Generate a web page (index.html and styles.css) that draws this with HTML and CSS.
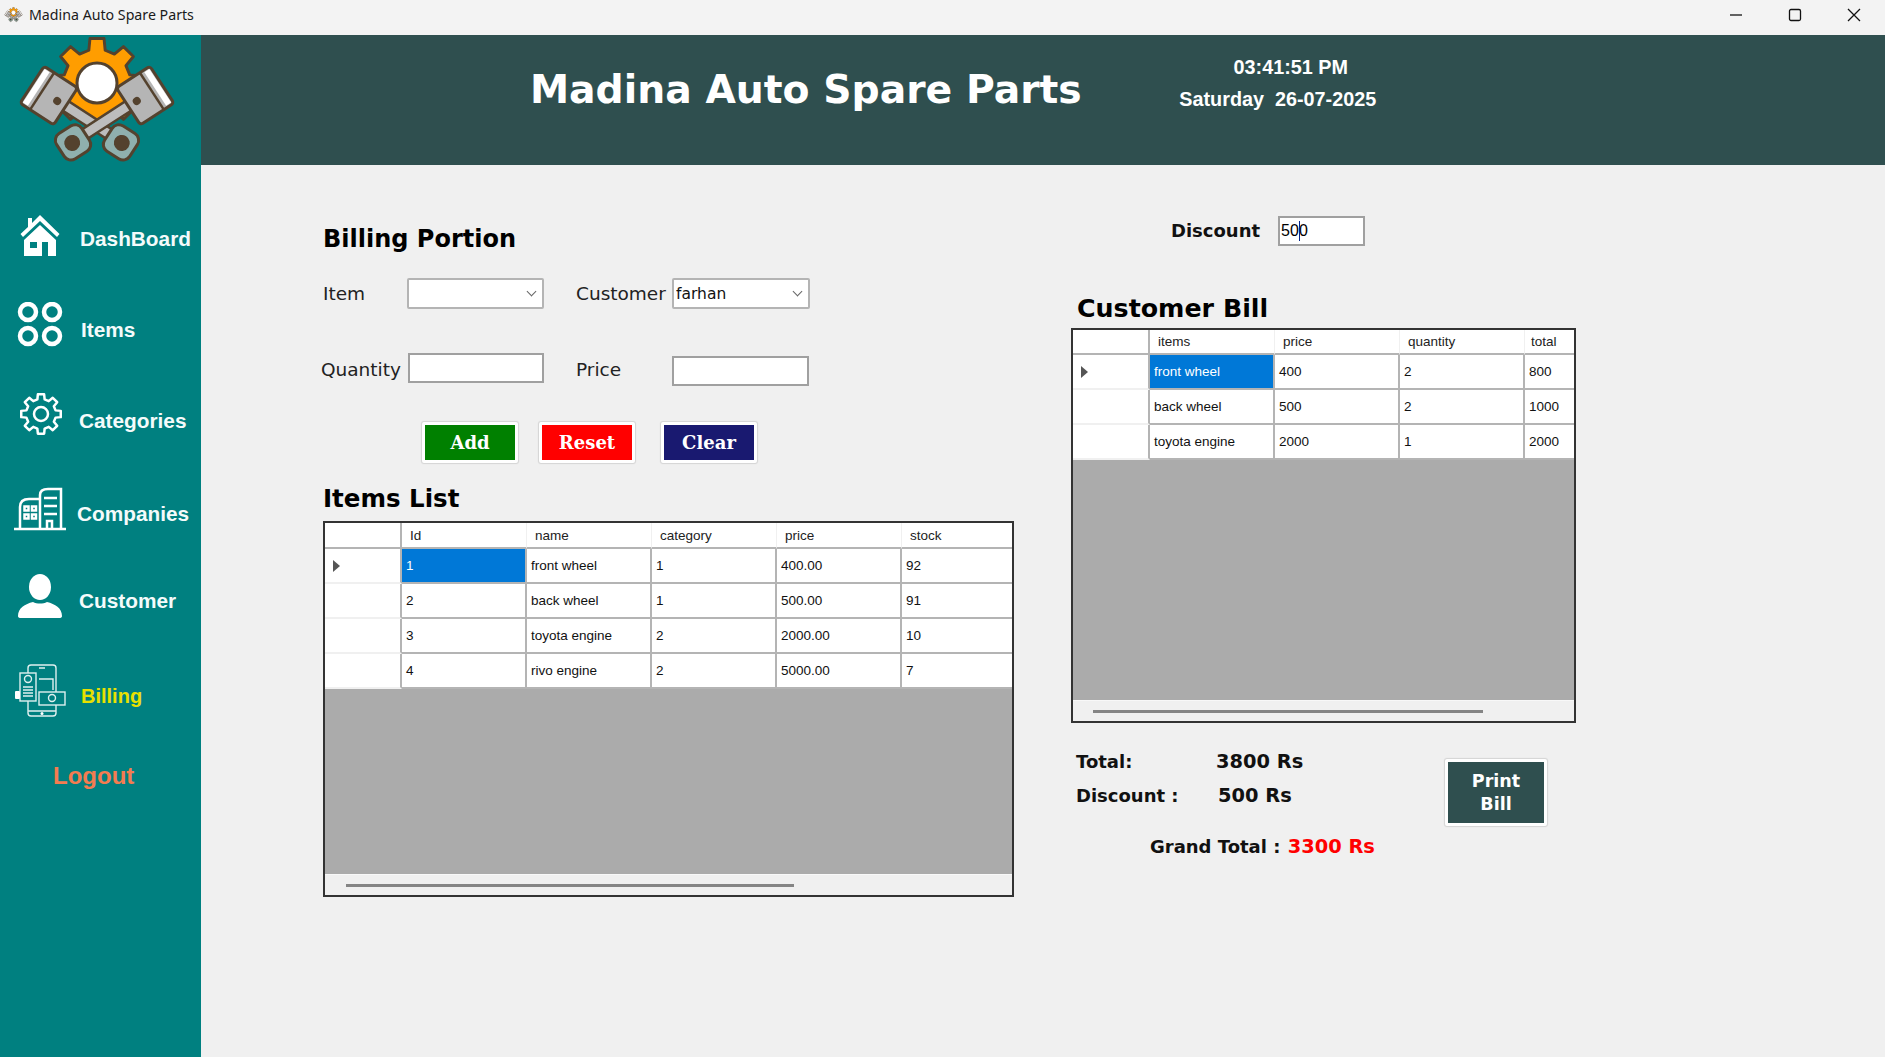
FILE: index.html
```html
<!DOCTYPE html>
<html lang="en">

<head>
    <meta charset="UTF-8">
    <title>Madina Auto Spare Parts</title>
    <link rel="stylesheet" href="styles.css">
</head>

<body>
    <div class="titlebar">
        <svg class="app-icon" viewBox="15 32 164 134"><use href="#logo-art"></use></svg>
        <span class="app-name">Madina Auto Spare Parts</span>
        <div class="win-btns">
            <svg class="win-btn" viewBox="0 0 12 12"><path d="M0 6h12" /></svg>
            <svg class="win-btn" viewBox="0 0 12 12"><rect x="0.5" y="0.5" width="11" height="11" rx="1.5" /></svg>
            <svg class="win-btn" viewBox="0 0 12 12"><path d="M0 0l12 12M12 0L0 12" /></svg>
        </div>
    </div>

    <div class="app">
        <aside class="sidebar">
            <svg class="logo" viewBox="0 35 201 155">
                <g id="logo-art">
                    <g transform="translate(97 83) scale(2.25)">
                        <path fill="#ff9d00" stroke="#54422e" stroke-width="1.3" stroke-linejoin="round"
                            d="M-3.63-14.55L-3.13-19.75 3.13-19.75 3.63-14.55 7.73-12.86 11.76-16.18 16.18-11.76 12.86-7.73 14.55-3.63 19.75-3.13 19.75 3.13 14.55 3.63 12.86 7.73 16.18 11.76 11.76 16.18 7.73 12.86 3.63 14.55 3.13 19.75-3.13 19.75-3.63 14.55-7.73 12.86-11.76 16.18-16.18 11.76-12.86 7.73-14.55 3.63-19.75 3.13-19.75-3.13-14.55-3.63-12.86-7.73-16.18-11.76-11.76-16.18-7.73-12.86Z" />
                    </g>
                    <circle cx="97" cy="83" r="20" fill="#fff" stroke="#54422e" stroke-width="3" />
                    <g id="piston" transform="translate(48 95) rotate(33)">
                        <rect x="18" y="-6" width="58" height="11" fill="#bdbdbd" stroke="#54422e" stroke-width="2.5" />
                        <rect x="72" y="-15" width="30" height="30" rx="8" fill="#8fb0ae" stroke="#54422e" stroke-width="3" />
                        <circle cx="88" cy="0" r="8" fill="#54422e" />
                        <rect x="-19" y="-22" width="40" height="44" rx="3" fill="#b5b5b5" stroke="#54422e" stroke-width="3" />
                        <rect x="-17" y="-20" width="6" height="40" fill="#fff" />
                        <path d="M-7-22V22" stroke="#54422e" stroke-width="2.500" />
                        <circle cx="11" cy="0" r="4" fill="#54422e" />
                    </g>
                    <use href="#piston" transform="translate(194 0) scale(-1 1)"></use>
                </g>
            </svg>

            <nav class="menu">
                <a class="menu-item item-dash" href="javascript:;">
                    <svg class="menu-icon" viewBox="0 0 80 46">
                        <path class="solid" d="M40 0L59.500 19 57 22 40 6 23 22 20.500 19 28 12V3h4V8z" />
                        <path class="solid" fill-rule="evenodd" d="M40 10L56 25V41H48V27H42V41H24V25zM30 27v6h7v-6z" />
                    </svg>
                    <span class="menu-label">DashBoard</span>
                </a>
                <a class="menu-item item-items" href="javascript:;">
                    <svg class="menu-icon" viewBox="0 0 80 46">
                        <g class="line thick">
                            <circle cx="28" cy="10" r="8" />
                            <circle cx="52" cy="10" r="8" />
                            <circle cx="28" cy="34" r="8" />
                            <circle cx="52" cy="34" r="8" />
                        </g>
                    </svg>
                    <span class="menu-label">Items</span>
                </a>
                <a class="menu-item item-cat" href="javascript:;">
                    <svg class="menu-icon" viewBox="0 0 80 46">
                        <g class="line" transform="translate(41 21)">
                            <path stroke-linejoin="round"
                                d="M-3.63-14.55L-3.13-19.75 3.13-19.75 3.63-14.55 7.73-12.86 11.76-16.18 16.18-11.76 12.86-7.73 14.55-3.63 19.75-3.13 19.75 3.13 14.55 3.63 12.86 7.73 16.18 11.76 11.76 16.18 7.73 12.86 3.63 14.55 3.13 19.75-3.13 19.75-3.63 14.55-7.73 12.86-11.76 16.18-16.18 11.76-12.86 7.73-14.55 3.63-19.75 3.13-19.75-3.13-14.55-3.63-12.86-7.73-16.18-11.76-11.76-16.18-7.73-12.86Z" />
                            <circle r="7" />
                        </g>
                    </svg>
                    <span class="menu-label">Categories</span>
                </a>
                <a class="menu-item item-comp" href="javascript:;">
                    <svg class="menu-icon" viewBox="0 0 80 46">
                        <g class="line">
                            <path d="M14 42h52" />
                            <path d="M20 42V20q0-8 9-8h11" />
                            <path d="M40 42V8q0-6 8-6h13v40" />
                            <path d="M44 11h13M44 19h13M44 27h13" />
                            <path d="M47 42v-8h5v8" />
                            <rect x="24.500" y="19.500" width="4" height="4" />
                            <rect x="32" y="19.500" width="4" height="4" />
                            <rect x="24.500" y="27.500" width="4" height="4" />
                            <rect x="32" y="27.500" width="4" height="4" />
                        </g>
                    </svg>
                    <span class="menu-label">Companies</span>
                </a>
                <a class="menu-item item-cust" href="javascript:;">
                    <svg class="menu-icon" viewBox="0 0 80 46">
                        <ellipse class="solid" cx="40" cy="13" rx="11" ry="13" />
                        <path class="solid" d="M18 42c0-8 7-12 15-14 4 2 10 2 14 0 8 2 15 6 15 14q0 2-3 2H21q-3 0-3-2z" />
                    </svg>
                    <span class="menu-label">Customer</span>
                </a>
                <a class="menu-item item-bill" href="javascript:;">
                    <svg class="menu-icon tall" viewBox="0 0 80 54">
                        <g class="line thin">
                            <rect x="28" y="1" width="28" height="51" rx="3" />
                            <path d="M28 47h28M39 4h6" />
                            <rect class="teal" x="20" y="9" width="16" height="28" />
                            <circle cx="28" cy="15" r="3.500" />
                            <path d="M23 23h10M23 26h10M23 29h10M23 32h10" />
                            <path d="M39 15h14v11" />
                            <rect class="teal" x="39" y="28" width="26" height="13" />
                            <circle cx="52" cy="34" r="3.500" />
                        </g>
                        <rect class="solid" x="15" y="27" width="5" height="8" rx="1" />
                        <circle class="solid" cx="42" cy="49.500" r="1.500" />
                    </svg>
                    <span class="menu-label billing">Billing</span>
                </a>
            </nav>
            <a class="logout" href="javascript:;">Logout</a>
        </aside>

        <div class="content">
            <header class="topbar">
                <h1 class="brand">Madina Auto Spare Parts</h1>
                <div class="clock">
                    <div class="clock-time">03:41:51 PM</div>
                    <div class="clock-date">Saturday&nbsp; 26-07-2025</div>
                </div>
            </header>

            <main class="page">
                <section class="left">
                    <h2 class="title title-billing">Billing Portion</h2>
                    <div class="form">
                        <label class="lbl lbl-item">Item</label>
                        <div class="combo"><select></select></div>
                        <span></span>
                        <label class="lbl">Customer</label>
                        <div class="combo combo-b">
                            <select>
                                <option>farhan</option>
                            </select>
                        </div>

                        <label class="lbl lbl-qty">Quantity</label>
                        <input class="field field-qty" type="text">
                        <span></span>
                        <label class="lbl">Price</label>
                        <input class="field field-price" type="text">
                    </div>

                    <div class="actions">
                        <button class="btn btn-add">Add</button>
                        <button class="btn btn-reset">Reset</button>
                        <button class="btn btn-clear">Clear</button>
                    </div>

                    <h2 class="title title-items">Items List</h2>
                    <div class="grid grid-items">
                        <table>
                            <colgroup>
                                <col class="c-head">
                                <col class="c-std">
                                <col class="c-std">
                                <col class="c-std">
                                <col class="c-std">
                                <col class="c-stock">
                            </colgroup>
                            <tr>
                                <th></th>
                                <th>Id</th>
                                <th>name</th>
                                <th>category</th>
                                <th>price</th>
                                <th>stock</th>
                            </tr>
                            <tr>
                                <td class="rowhead"><i class="arrow"></i></td>
                                <td class="sel">1</td>
                                <td>front wheel</td>
                                <td>1</td>
                                <td>400.00</td>
                                <td>92</td>
                            </tr>
                            <tr>
                                <td class="rowhead"></td>
                                <td>2</td>
                                <td>back wheel</td>
                                <td>1</td>
                                <td>500.00</td>
                                <td>91</td>
                            </tr>
                            <tr>
                                <td class="rowhead"></td>
                                <td>3</td>
                                <td>toyota engine</td>
                                <td>2</td>
                                <td>2000.00</td>
                                <td>10</td>
                            </tr>
                            <tr>
                                <td class="rowhead"></td>
                                <td>4</td>
                                <td>rivo engine</td>
                                <td>2</td>
                                <td>5000.00</td>
                                <td>7</td>
                            </tr>
                        </table>
                        <div class="grid-empty"></div>
                        <div class="hscroll"><div class="thumb thumb-items"></div></div>
                    </div>
                </section>

                <section class="right">
                    <div class="discount">
                        <label class="strong disc-label">Discount</label>
                        <div class="discount-box">
                            <input class="field field-disc" type="text" value="500">
                            <i class="caret"></i>
                        </div>
                    </div>

                    <h2 class="title title-bill">Customer Bill</h2>
                    <div class="grid grid-bill">
                        <table>
                            <colgroup>
                                <col class="c-head">
                                <col class="c-std">
                                <col class="c-std">
                                <col class="c-std">
                                <col class="c-total">
                            </colgroup>
                            <tr>
                                <th></th>
                                <th>items</th>
                                <th>price</th>
                                <th>quantity</th>
                                <th class="th-total">total</th>
                            </tr>
                            <tr>
                                <td class="rowhead"><i class="arrow"></i></td>
                                <td class="sel">front wheel</td>
                                <td>400</td>
                                <td>2</td>
                                <td>800</td>
                            </tr>
                            <tr>
                                <td class="rowhead"></td>
                                <td>back wheel</td>
                                <td>500</td>
                                <td>2</td>
                                <td>1000</td>
                            </tr>
                            <tr>
                                <td class="rowhead"></td>
                                <td>toyota engine</td>
                                <td>2000</td>
                                <td>1</td>
                                <td>2000</td>
                            </tr>
                        </table>
                        <div class="grid-empty"></div>
                        <div class="hscroll"><div class="thumb thumb-bill"></div></div>
                    </div>

                    <div class="summary">
                        <div class="sums">
                            <div class="sum-row strong"><span class="sum-key">Total:</span><span class="amount">3800 Rs</span></div>
                            <div class="sum-row sum-disc strong"><span class="sum-key">Discount :</span><span class="amount sum-val">500 Rs</span></div>
                            <div class="sum-grand strong">Grand Total : <span class="amount red">3300 Rs</span></div>
                        </div>
                        <button class="btn-print">Print<br>Bill</button>
                    </div>
                </section>
            </main>
        </div>
    </div>
</body>

</html>
```

FILE: styles.css
```css
* {
    box-sizing: border-box;
}

body {
    margin: 0;
    width: 1885px;
    height: 1057px;
    overflow: hidden;
    background: #f0f0f0;
    font-family: "DejaVu Sans", sans-serif;
    color: #111;
}

h1,
h2 {
    margin: 0;
}

a {
    text-decoration: none;
}

.titlebar {
    display: flex;
    align-items: center;
    height: 35px;
    padding: 0 0 6px 4px;
    background: #f3f3f3;
}

.app-icon {
    width: 19px;
    height: 21px;
}

.app-name {
    margin-left: 6px;
    font-family: "Noto Sans", sans-serif;
    font-size: 14.200px;
    color: #1a1a1a;
}

.win-btns {
    display: flex;
    gap: 47px;
    margin-left: auto;
    padding-right: 25px;
}

.win-btn {
    width: 12px;
    height: 12px;
    overflow: visible;
    fill: none;
    stroke: #111;
    stroke-width: 1.300;
}

.app {
    display: flex;
    height: 1022px;
}

/* sidebar */
.sidebar {
    width: 201px;
    flex: none;
    background: #008080;
}

.logo {
    display: block;
    width: 201px;
    height: 155px;
}

.menu {
    padding-top: 25px;
}

.menu-item {
    display: flex;
    align-items: flex-start;
    color: #fff;
}

.menu-icon {
    display: block;
    flex: none;
    width: 80px;
    height: 46px;
}

.menu-icon.tall {
    height: 54px;
}

.solid {
    fill: #fff;
}

.line {
    fill: none;
    stroke: #fff;
    stroke-width: 2.500;
}

.line.thick {
    stroke-width: 4.500;
}

.line.thin {
    stroke: #dff0ef;
    stroke-width: 1.400;
}

.teal {
    fill: #008080;
}

.menu-label {
    font-family: "Liberation Sans", Arial, sans-serif;
    font-size: 20.800px;
    font-weight: bold;
    line-height: 24px;
    color: #f4fbfb;
}

.billing {
    font-size: 20px;
    color: #e8e000;
}

.item-dash {
    height: 87px;
}

.item-dash .menu-label {
    margin-top: 12px;
}

.item-items {
    height: 91px;
}

.item-items .menu-label {
    margin: 16px 0 0 1px;
}

.item-cat {
    height: 94px;
}

.item-cat .menu-label {
    margin: 16px 0 0 -1px;
}

.item-comp {
    height: 87px;
}

.item-comp .menu-label {
    margin: 15px 0 0 -3px;
}

.item-cust {
    height: 90px;
}

.item-cust .menu-label {
    margin: 15px 0 0 -1px;
}

.item-bill {
    height: 98px;
}

.item-bill .menu-label {
    margin: 20px 0 0 1px;
}

.logout {
    display: block;
    padding-left: 53px;
    font-family: "Liberation Sans", Arial, sans-serif;
    font-size: 24px;
    font-weight: bold;
    line-height: 28px;
    color: #f47c50;
}

/* top bar */
.content {
    flex: 1;
}

.topbar {
    display: flex;
    height: 130px;
    padding: 20px 0 0 329px;
    background: #2f4f4f;
    color: #fff;
}

.brand {
    margin-top: 11px;
    font-size: 39.300px;
    font-weight: bold;
    line-height: 48px;
}

.clock {
    width: 200px;
    margin-left: 96px;
    font-family: "Liberation Sans", Arial, sans-serif;
    font-size: 19.800px;
    font-weight: bold;
    line-height: 24px;
    text-align: center;
    white-space: nowrap;
}

.clock-time {
    margin: 0 0 8px 26px;
}

/* page body */
.page {
    display: flex;
    padding: 51px 0 0 122px;
}

.left {
    width: 749px;
    flex: none;
    padding-top: 8px;
}

.title {
    font-size: 24.500px;
    line-height: 30px;
    color: #000;
}

.title-billing {
    font-size: 24px;
}

.form {
    display: grid;
    grid-template-columns: 84px 137px 32px 96px 138px;
    grid-template-rows: 31px 33px;
    row-gap: 44px;
    align-items: center;
    margin-top: 24px;
}

.lbl {
    font-size: 18.500px;
    white-space: nowrap;
    color: #222;
}

.lbl-qty {
    margin-left: -2px;
}

.combo {
    position: relative;
    height: 31px;
}

.combo select {
    width: 100%;
    height: 100%;
    padding: 0 2px;
    border: 2px solid #b4b4b4;
    border-radius: 2px;
    background: #fff;
    font-family: "DejaVu Sans", sans-serif;
    font-size: 15.500px;
    color: #111;
    appearance: none;
}

.combo::after {
    content: "";
    position: absolute;
    top: 10px;
    right: 9px;
    width: 6px;
    height: 6px;
    border-right: 1.500px solid #666;
    border-bottom: 1.500px solid #666;
    transform: rotate(45deg);
}

.field {
    display: block;
    height: 30px;
    padding: 0 2px;
    border: 2px solid #a0a0a0;
    border-radius: 0;
    background: #fff;
    font-family: "Liberation Sans", Arial, sans-serif;
    font-size: 16px;
}

.field-qty {
    align-self: start;
    width: 136px;
    margin-left: 1px;
}

.field-price {
    align-self: end;
    width: 137px;
}

.actions {
    display: flex;
    margin: 36px 0 0 99px;
}

.btn {
    width: 96px;
    height: 41px;
    border: 3px solid #fff;
    border-radius: 2px;
    box-shadow: 0 0 1px 1px #d4d4d4;
    font-family: "DejaVu Serif", serif;
    font-size: 18px;
    font-weight: bold;
    color: #fff;
}

.btn-add {
    background: #008000;
}

.btn-reset {
    margin-left: 21px;
    background: #f00;
}

.btn-clear {
    margin-left: 26px;
    background: #191970;
}

.title-items {
    margin-top: 21px;
}

/* data grids */
.grid {
    display: flex;
    flex-direction: column;
    border: 2px solid #333;
    background: #f0f0f0;
}

.grid-items {
    width: 691px;
    height: 376px;
    margin-top: 7px;
}

.grid-bill {
    width: 505px;
    height: 395px;
    margin: 4px 0 0 -1px;
}

table {
    flex: none;
    width: 100%;
    border-collapse: separate;
    border-spacing: 0;
    table-layout: fixed;
    background: #fff;
    font-family: "Liberation Sans", Arial, sans-serif;
    font-size: 13.500px;
}

.c-head {
    width: 77px;
}

.c-std {
    width: 125px;
}

.c-stock {
    width: 110px;
}

.c-total {
    width: 49px;
}

th {
    height: 26px;
    padding: 0 0 0 8px;
    border-right: 1px solid #f0f0f0;
    border-bottom: 2px solid #b4b4b4;
    background: #fff;
    font-weight: normal;
    text-align: left;
    color: #222;
}

.grid-bill th {
    height: 25px;
}

.th-total {
    padding-left: 6px;
}

td {
    height: 35px;
    padding: 0 0 0 4px;
    border-right: 2px solid #b4b4b4;
    border-bottom: 2px solid #b4b4b4;
    white-space: nowrap;
    color: #111;
}

td:last-child,
th:last-child {
    border-right: 0;
}

.rowhead {
    padding-left: 8px;
    border-bottom-color: #f0f0f0;
}

th:first-child {
    border-right: 2px solid #b4b4b4;
}

.sel {
    background: #0078d7;
    color: #fff;
}

.arrow {
    display: block;
    width: 0;
    height: 0;
    border-top: 6px solid transparent;
    border-bottom: 6px solid transparent;
    border-left: 7px solid #555;
}

.grid-empty {
    flex: 1;
    background: #ababab;
}

.hscroll {
    flex: none;
    height: 21px;
    padding-top: 9px;
    border-top: 1px solid #f8f8f8;
}

.thumb {
    height: 3px;
    background: #858585;
}

.thumb-items {
    width: 448px;
    margin-left: 21px;
}

.thumb-bill {
    width: 390px;
    margin-left: 20px;
}

/* right column */
.right {
    flex: none;
    width: 520px;
}

.strong {
    font-size: 18px;
    font-weight: bold;
    color: #111;
}

.discount {
    display: flex;
    align-items: center;
    gap: 18px;
    height: 30px;
    padding-left: 99px;
}

.disc-label {
    margin-top: -2px;
}

.discount-box {
    position: relative;
}

.field-disc {
    width: 87px;
    padding-left: 1px;
}

.caret {
    position: absolute;
    top: 5px;
    left: 21px;
    width: 1px;
    height: 20px;
    background: #00238c;
}

.title-bill {
    margin: 48px 0 0 5px;
    font-size: 25.300px;
}

.summary {
    display: flex;
    align-items: flex-start;
    margin-top: 26px;
}

.sums {
    width: 373px;
    padding-left: 4px;
}

.sum-row {
    display: flex;
    line-height: 26px;
}

.sum-key {
    width: 140px;
}

.amount {
    font-size: 19.400px;
}

.sum-disc {
    margin-top: 8px;
}

.sum-val {
    margin-left: 2px;
}

.sum-grand {
    margin-top: 25px;
    padding-left: 74px;
    line-height: 26px;
}

.red {
    margin-left: 1px;
    color: #f00;
}

.btn-print {
    width: 102px;
    height: 67px;
    margin-top: 10px;
    border: 3px solid #fff;
    border-radius: 2px;
    box-shadow: 0 0 1px 1px #d4d4d4;
    background: #2f4f4f;
    font-family: "DejaVu Sans", sans-serif;
    font-size: 17.500px;
    font-weight: bold;
    line-height: 23px;
    color: #fff;
}
```
